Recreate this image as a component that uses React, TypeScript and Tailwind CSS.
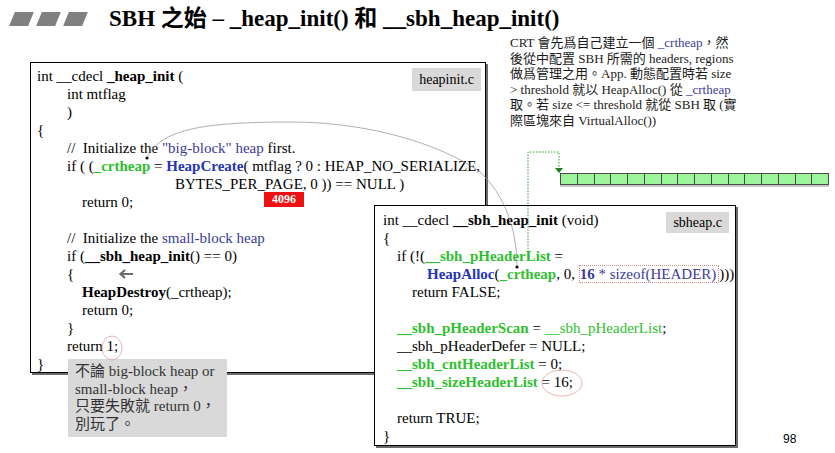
import React from "react";

const serif = "font-['Liberation_Serif','Noto_Sans_CJK_TC',serif]";

function G({ children, bold = true }: { children: React.ReactNode; bold?: boolean }) {
    return <span className={`text-[#2fbf2f] ${bold ? "font-bold" : ""}`}>{children}</span>;
}

function B({ children }: { children: React.ReactNode }) {
    return <span className="text-[#2435b8] font-bold">{children}</span>;
}

function N({ children }: { children: React.ReactNode }) {
    return <span className="text-[#3b3b99]">{children}</span>;
}

function Line({ indent = 0, children }: { indent?: number; children?: React.ReactNode }) {
    return (
        <div className="h-[18px] leading-[18px] whitespace-pre" style={{ paddingLeft: indent }}>
            {children}
        </div>
    );
}

function HeapInitPanel() {
    return (
        <div className="relative w-[456px] h-[311px] ml-[30px] mt-[26px] border border-black bg-white shadow-[2px_2px_0_#6b6b6b] pt-[4px] pl-[6px] text-[15px] text-black">
            <div className="absolute right-[4px] top-[5px] bg-[#d9d9d9] px-[7px] h-[23px] leading-[23px] text-[14px]">heapinit.c</div>
            <Line>int __cdecl <b>_heap_init</b> (</Line>
            <Line indent={30}>int mtflag</Line>
            <Line indent={30}>)</Line>
            <Line>{"{"}</Line>
            <Line indent={30}>//  Initialize the <N>"big-block" heap</N> first.</Line>
            <Line indent={30}>if ( (<G>_crtheap</G> = <B>HeapCreate</B>( mtflag ? 0 : HEAP_NO_SERIALIZE,</Line>
            <Line indent={138}>BYTES_PER_PAGE, 0 )) == NULL )</Line>
            <Line indent={45}>return 0;</Line>
            <Line />
            <Line indent={30}>//  Initialize the <N>small-block heap</N></Line>
            <Line indent={30}>if (<b>__sbh_heap_init</b>() == 0)</Line>
            <Line indent={30}>
                <span className="inline-flex items-center">
                    {"{"}
                    <svg className="ml-[44px]" width="16" height="10" viewBox="0 0 16 10">
                        <path d="M15 5H3M7 1L2.5 5L7 9" fill="none" stroke="#6b6b6b" strokeWidth="2.2" />
                    </svg>
                </span>
            </Line>
            <Line indent={45}><b>HeapDestroy</b>(_crtheap);</Line>
            <Line indent={45}>return 0;</Line>
            <Line indent={30}>{"}"}</Line>
            <Line indent={30}>return 1;</Line>
            <Line>{"}"}</Line>
            <div className="absolute left-[233px] top-[129px] w-[40px] h-[15px] bg-[#ee1111] text-white font-bold text-[12px] leading-[15px] text-center">4096</div>
        </div>
    );
}

function SbhPanel() {
    return (
        <div className="absolute left-[374px] top-[205px] w-[362px] h-[241px] border border-black bg-white shadow-[2px_2px_0_#6b6b6b] pt-[5px] pl-[8px] text-[15px] text-black">
            <div className="absolute right-[6px] top-[6px] bg-[#d9d9d9] px-[7px] h-[21px] leading-[21px] text-[14px]">sbheap.c</div>
            <Line>int __cdecl <b>__sbh_heap_init</b> (void)</Line>
            <Line>{"{"}</Line>
            <Line indent={14}>if (!(<G>__sbh_pHeaderList</G> =</Line>
            <Line indent={44}>
                <B>HeapAlloc</B>(<G>_crtheap</G>, 0, <span className="border border-dotted border-[#e08a8a] pr-[2px]"><N><b>16</b> * sizeof(HEADER)</N></span>)))
            </Line>
            <Line indent={29}>return FALSE;</Line>
            <Line />
            <Line indent={14}><G>__sbh_pHeaderScan</G> = <G bold={false}>__sbh_pHeaderList</G>;</Line>
            <Line indent={14}>__sbh_pHeaderDefer = NULL;</Line>
            <Line indent={14}><G>__sbh_cntHeaderList</G> = 0;</Line>
            <Line indent={14}><G>__sbh_sizeHeaderList</G> = 16;</Line>
            <Line />
            <Line indent={14}>return TRUE;</Line>
            <Line>{"}"}</Line>
        </div>
    );
}

export default function App() {
    const cells = Array.from({ length: 16 });
    return (
        <div className={`relative w-[835px] h-[453px] bg-white overflow-hidden ${serif}`}>
            <div className="flex items-center h-[36px] pl-[12px] pt-[2px]">
                <div className="flex gap-[8px]">
                    <div className="w-[19px] h-[14px] bg-[#808080] -skew-x-[22deg]" />
                    <div className="w-[19px] h-[14px] bg-[#808080] -skew-x-[22deg]" />
                    <div className="w-[19px] h-[14px] bg-[#808080] -skew-x-[22deg]" />
                </div>
                <div className="ml-[24px] text-[23px] font-bold text-black whitespace-pre">SBH 之始 – _heap_init() 和 __sbh_heap_init()</div>
            </div>

            <div className="flex">
                <HeapInitPanel />
                <div className="ml-[24px] -mt-[1px]">
                    <div className="text-[13px] leading-[15.6px] text-[#1a1a1a] whitespace-nowrap">
                        <div>CRT 會先爲自己建立一個 <N>_crtheap</N>，然</div>
                        <div>後從中配置 SBH 所需的 headers, regions</div>
                        <div>做爲管理之用。App. 動態配置時若 size</div>
                        <div>&gt; threshold 就以 HeapAlloc() 從 <N>_crtheap</N></div>
                        <div>取。若 size &lt;= threshold 就從 SBH 取 (實</div>
                        <div>際區塊來自 VirtualAlloc())</div>
                    </div>
                    <div className="flex ml-[50px] mt-[44px] w-[269px] h-[12px] border-l border-[#4a4a4a] shadow-[0_2px_0_#c8c8c8]">
                        {cells.map((_, i) => (
                            <div key={i} className="flex-1 h-[12px] bg-[#9df59d] border border-l-0 border-[#4a4a4a]" />
                        ))}
                    </div>
                </div>
            </div>

            <SbhPanel />

            <div className="absolute left-[68px] top-[359px] w-[159px] h-[78px] bg-[#d9d9d9] pl-[7px] pt-[4px] text-[15px] leading-[17.5px] text-[#333]">
                <div>不論 big-block heap or</div>
                <div>small-block heap，</div>
                <div>只要失敗就 return 0，</div>
                <div>別玩了。</div>
            </div>

            <div className="absolute left-[783px] top-[430px] text-[12px] font-['Liberation_Sans',sans-serif] text-black">98</div>

            <svg className="absolute inset-0 pointer-events-none" width="835" height="453" viewBox="0 0 835 453">
                <path d="M147 158 C160 130 200 122 290 122 C380 122 450 150 480 172 C505 195 517 230 517 267" fill="none" stroke="#9a9a9a" strokeWidth="0.8" />
                <circle cx="147" cy="158" r="1.6" fill="#111" />
                <circle cx="517" cy="267" r="1.6" fill="#111" />
                <path d="M528 258 V152 H559 V168" fill="none" stroke="#2e9e2e" strokeWidth="1" strokeDasharray="1.5 1.5" />
                <path d="M555 168 L563 168 L559 173 Z" fill="#1f7f1f" />
                <ellipse cx="112" cy="348" rx="10" ry="12" fill="none" stroke="#e6a0a0" strokeWidth="0.8" />
                <ellipse cx="562" cy="383" rx="20" ry="13" fill="none" stroke="#e6a0a0" strokeWidth="0.8" />
            </svg>
        </div>
    );
}
